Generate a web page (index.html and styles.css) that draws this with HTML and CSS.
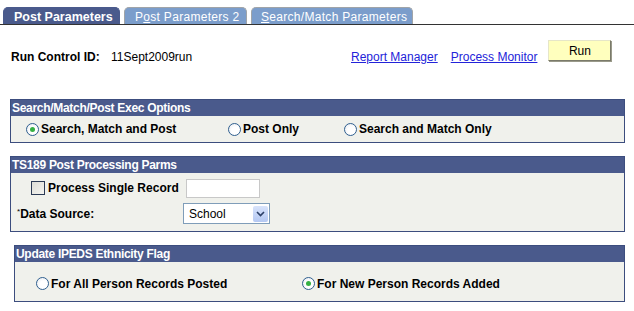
FILE: index.html
```html
<!DOCTYPE html>
<html lang="en">
<head>
    <meta charset="UTF-8">
    <title>Post Parameters</title>
    <link rel="stylesheet" href="styles.css">
</head>
<body>
    <div class="tabs">
        <div class="tab active">Post Parameters</div>
        <div class="tab">P<u>o</u>st Parameters 2</div>
        <div class="tab"><u>S</u>earch/Match Parameters</div>
    </div>

    <div class="run-row">
        <span class="label run-label">Run Control ID:</span>
        <span class="run-id">11Sept2009run</span>
        <a href="#" class="link report">Report Manager</a>
        <a href="#" class="link">Process Monitor</a>
        <button class="run-btn">Run</button>
    </div>

    <div class="section exec">
        <div class="section-head">Search/Match/Post Exec Options</div>
        <div class="section-body radio-row">
            <span class="opt opt-1"><span class="radio checked"></span>Search, Match and Post</span>
            <span class="opt opt-2"><span class="radio"></span>Post Only</span>
            <span class="opt"><span class="radio"></span>Search and Match Only</span>
        </div>
    </div>

    <div class="section parms">
        <div class="section-head">TS189 Post Processing Parms</div>
        <div class="section-body">
            <div class="field-row single">
                <span class="check"></span>
                <span class="label">Process Single Record</span>
                <span class="text-input"></span>
            </div>
            <div class="field-row source">
                <span class="label"><span class="req">*</span>Data Source:</span>
                <span class="select">
                    <span class="select-value">School</span>
                    <span class="select-arrow">
                        <svg width="9" height="6" viewBox="0 0 9 6"><path d="M1 1 L4.5 4.5 L8 1" fill="none" stroke="#2b3f66" stroke-width="1.6"/></svg>
                    </span>
                </span>
            </div>
        </div>
    </div>

    <div class="section ipeds">
        <div class="section-head">Update IPEDS Ethnicity Flag</div>
        <div class="section-body radio-row">
            <span class="opt opt-all"><span class="radio"></span>For All Person Records Posted</span>
            <span class="opt"><span class="radio checked"></span>For New Person Records Added</span>
        </div>
    </div>
</body>
</html>
```

FILE: styles.css
```css
body {
    margin: 0;
    font-family: "Liberation Sans", Arial, sans-serif;
    font-size: 12px;
    color: #000;
    background: #fff;
}
.tabs {
    display: flex;
    gap: 4px;
    padding: 7px 0 0 3px;
    border-bottom: 1px solid #333;
}
.tab {
    height: 17px;
    line-height: 18px;
    padding: 0 0 0 10px;
    border: 1px solid #a0a4a8;
    border-bottom: none;
    border-radius: 5px 5px 0 0;
    background: #7b9dcb;
    color: #fff;
    font-size: 12px;
    letter-spacing: 0.3px;
    white-space: nowrap;
    overflow: hidden;
    box-sizing: border-box;
}
.tab:nth-child(2) { width: 123px; padding-left: 10px; }
.tab:nth-child(3) { width: 162px; padding-left: 9px; }
.tab.active {
    width: 117px;
    background: #4a5a8c;
    border-color: #4a5a8c;
    font-weight: bold;
    font-size: 12.5px;
    letter-spacing: 0;
    padding-left: 10px;
}
.tab u { text-decoration: underline; }

.run-row {
    display: flex;
    align-items: center;
    height: 23px;
    margin-top: 20px;
    padding-left: 11px;
}
.label { font-weight: bold; }
.run-label { width: 100px; }
.run-id { width: 240px; }
.link {
    color: #2323d9;
    text-decoration: underline;
    font-size: 12px;
}
.report { margin-right: 13px; }
.run-btn {
    margin-left: 11px;
    width: 63px;
    height: 21px;
    padding: 0;
    background: #ffffbe;
    border: 1px solid;
    border-color: #e6e6c8 #7a7a6a #7a7a6a #e6e6c8;
    box-shadow: 1px 1px 0 #9a9a8a;
    font-family: "Liberation Sans", Arial, sans-serif;
    font-size: 12px;
    margin-top: -12px;
}

.section {
    width: 615px;
    box-sizing: border-box;
    margin-left: 10px;
    border: 1px solid #3c4d7e;
    background: #f0f1ec;
}
.section-head {
    height: 16px;
    line-height: 16px;
    background: #4a5a8c;
    color: #fff;
    font-weight: bold;
    padding-left: 1px;
    letter-spacing: -0.3px;
}
.exec { margin-top: 31px; }
.parms { margin-top: 13px; }
.parms .section-body { padding-bottom: 3px; }
.ipeds { margin-top: 13px; margin-left: 14px; width: 611px; }

.radio-row {
    display: flex;
    align-items: center;
    font-weight: bold;
}
.exec .radio-row { height: 26px; padding-left: 15px; }
.ipeds .radio-row { height: 39px; padding-left: 21px; padding-top: 4px; box-sizing: border-box; }
.opt {
    display: flex;
    align-items: center;
    gap: 2px;
}
.opt-1 { width: 202px; }
.opt-2 { width: 116px; }
.opt-all { width: 266px; }

.radio {
    width: 11px;
    height: 11px;
    border: 1px solid #2f5f8f;
    border-radius: 50%;
    background: radial-gradient(circle at 60% 60%, #ffffff 40%, #e4e8ee 100%);
    position: relative;
}
.radio.checked::after {
    content: "";
    position: absolute;
    left: 3px;
    top: 3px;
    width: 5px;
    height: 5px;
    border-radius: 50%;
    background: #35b044;
}

.field-row {
    display: flex;
    align-items: center;
}
.single { height: 27px; padding-left: 20px; padding-top: 3px; box-sizing: border-box; }
.source { height: 28px; padding-left: 6px; }
.check {
    width: 12px;
    height: 12px;
    border: 1px solid #2b3a55;
    background: linear-gradient(135deg, #dcdcd6, #f4f4f0);
    margin-right: 3px;
}
.single .label { width: 138px; }
.source .label { width: 166px; }
.req { font-size: 8px; vertical-align: top; font-weight: normal; }
.text-input {
    width: 72px;
    height: 17px;
    border: 1px solid #c8c8c8;
    background: #fff;
}
.select {
    display: flex;
    align-items: center;
    width: 85px;
    height: 19px;
    border: 1px solid #7f9db9;
    background: #fff;
    margin-top: -1px;
}
.select-value {
    flex: 1;
    padding-left: 5px;
    font-size: 12px;
}
.select-arrow {
    display: flex;
    align-items: center;
    justify-content: center;
    width: 15px;
    height: 16px;
    margin-right: 1px;
    background: linear-gradient(#d8e3fb, #b4c8f2);
    border-radius: 2px;
}
```
